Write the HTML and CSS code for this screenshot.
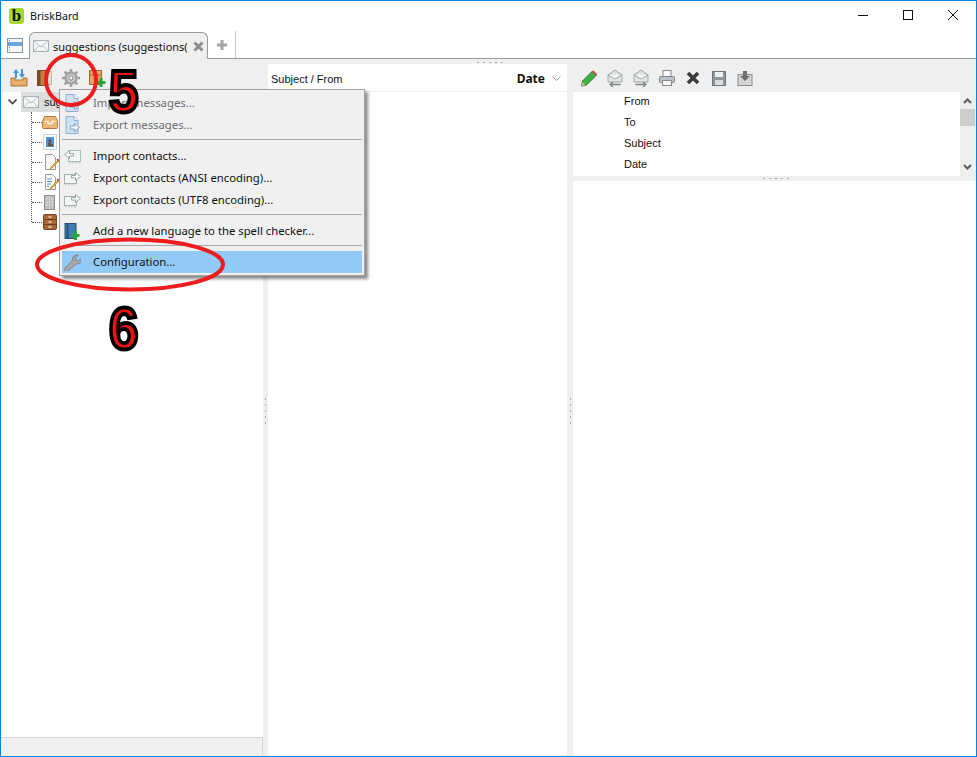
FILE: index.html
```html
<!DOCTYPE html>
<html lang="en">
<head>
   <meta charset="utf-8">
   <title>BriskBard</title>
   <link rel="stylesheet" href="styles.css">
</head>
<body>
<svg class="defs" width="0" height="0">
   <defs>
      <symbol id="mail" viewBox="0 0 16 16">
         <rect x="0.5" y="2.5" width="15" height="11" fill="#f4f6f6" stroke="#a9b4b6"/>
         <path d="M1 3l7 6 7-6M1 13l5-5.500M15 13l-5-5.500" fill="none" stroke="#b4bfc1"/>
      </symbol>
      <symbol id="doc" viewBox="0 0 16 18">
         <path d="M1.500 .5h8l4 4v13h-12z" fill="#cfe0f2" stroke="#8fb0d2"/>
         <path d="M9.500 .5v4h4" fill="#eef5fb" stroke="#8fb0d2"/>
         <path d="M6 10h4V7.500l5 4-5 4V13H6z" fill="#f4f8fc" stroke="#7ea3c8"/>
      </symbol>
      <symbol id="card-out" viewBox="0 0 17 15">
         <rect x=".5" y="3.500" width="12" height="9" fill="#f3f6f5" stroke="#a7b3b3"/>
         <path d="M2 12.500v2M5 12.500v2M8 12.500v2M11 12.500v2" stroke="#a7b3b3"/>
         <path d="M7.500 4.500h4V1.500l5 4-5 4V7h-4z" fill="#fbfbfb" stroke="#9aa6a6"/>
      </symbol>
      <symbol id="card-in" viewBox="0 0 17 15">
         <rect x="4.500" y="1.500" width="12" height="11" fill="#f3f6f5" stroke="#a7c0b8"/>
         <path d="M6 12.500v2M9 12.500v2M12 12.500v2M15 12.500v2" stroke="#a7b3b3"/>
         <path d="M9.500 4.500h-4V1.500l-5 4 5 4V7h4z" fill="#fbfbfb" stroke="#9aa6a6"/>
      </symbol>
      <symbol id="tray" viewBox="0 0 16 13">
         <path d="M2.500 .5h11l2 5v6a1 1 0 0 1-1 1h-13a1 1 0 0 1-1-1v-6z" fill="#edb777" stroke="#b07a3e"/>
         <path d="M3 5.500h3v2h4v-2h3" fill="none" stroke="#fff2dc" stroke-width="1.500"/>
      </symbol>
      <symbol id="gray-mail" viewBox="0 0 17 18">
         <path d="M1.500 6l7-5 7 5v7h-14z" fill="#e4e6e6" stroke="#9ea5a5"/>
         <path d="M1.500 6l7 4 7-4" fill="#f6f6f6" stroke="#9ea5a5"/>
      </symbol>
   </defs>
</svg>

<div class="window">
   <header class="titlebar">
      <span class="logo">b</span>
      <span class="app-name">BriskBard</span>
      <div class="win-buttons">
         <svg width="10" height="10" viewBox="0 0 10 10"><path d="M0 5.500h10" stroke="#111"/></svg>
         <svg width="10" height="10" viewBox="0 0 10 10"><rect x=".5" y=".5" width="9" height="9" fill="none" stroke="#111"/></svg>
         <svg width="10" height="10" viewBox="0 0 10 10"><path d="M0 0l10 10M10 0L0 10" stroke="#111"/></svg>
      </div>
   </header>

   <div class="tabbar">
      <svg class="tab-list" width="16" height="15" viewBox="0 0 16 15">
         <rect x=".5" y=".5" width="15" height="14" fill="#f4f6f8" stroke="#8a98a6"/>
         <rect x="1" y="4" width="14" height="4" fill="#6fa3dc"/>
         <path d="M2 2.500h1M2 9.500h1M2 12h1" stroke="#7a8894"/>
      </svg>
      <div class="tab">
         <svg width="16" height="16"><use href="#mail"/></svg>
         <span class="tab-title">suggestions (suggestions(</span>
         <svg class="tab-close" width="11" height="11" viewBox="0 0 11 11"><path d="M1.500 1.500l8 8M9.500 1.500l-8 8" stroke="#8c8c8c" stroke-width="3"/></svg>
      </div>
      <svg class="tab-add" width="10" height="10" viewBox="0 0 10 10"><path d="M5 0v10M0 5h10" stroke="#a4a4a4" stroke-width="3"/></svg>
   </div>

   <div class="grip-row"><span class="grip-h grip-top"></span></div>

   <main class="panes">
      <section class="pane-left">
         <div class="toolbar">
            <svg width="18" height="18" viewBox="0 0 18 18">
               <path d="M1 9h4v2h8V9h4v8H1z" fill="#e9ae68" stroke="#a87537"/>
               <path d="M5 9V4H3l3-4 3 4H7v5z" fill="#3f93e0"/>
               <path d="M13 0v5h2l-3 4-3-4h2V0z" fill="#3f93e0"/>
            </svg>
            <svg width="16" height="16" viewBox="0 0 16 16">
               <rect x=".5" y=".5" width="10" height="15" fill="#c08040" stroke="#7a4a20"/>
               <rect x="1" y="1" width="2.500" height="14" fill="#7a4a20"/>
               <rect x="10.500" y="1.500" width="4" height="13" fill="#e8e0d0" stroke="#999" stroke-dasharray="2 1"/>
            </svg>
            <svg class="gear" width="18" height="18" viewBox="0 0 18 18">
               <circle cx="9" cy="9" r="5.500" fill="#d0d0d0" stroke="#a2a2a2" stroke-width="2.400"/>
               <path d="M9 0v4M9 14v4M0 9h4M14 9h4M2.600 2.600l2.800 2.800M12.600 12.600l2.800 2.800M15.400 2.600l-2.800 2.800M5.400 12.600l-2.800 2.800" stroke="#a2a2a2" stroke-width="2.600"/>
               <circle cx="9" cy="9" r="2.200" fill="#f4f4f4" stroke="#808080"/>
            </svg>
            <svg width="18" height="18" viewBox="0 0 18 18">
               <rect x="1.500" y="1.500" width="12" height="14" fill="#e5a765" stroke="#a5682f"/>
               <path d="M2 6h11" stroke="#a5682f"/>
               <path d="M13 9v9M8.500 13.500h9" stroke="#25a83a" stroke-width="3"/>
            </svg>
         </div>
         <div class="tree">
            <div class="tree-root">
               <svg class="chevron" width="9" height="6" viewBox="0 0 9 6"><path d="M.5 .5l4 4 4-4" fill="none" stroke="#444" stroke-width="1.600"/></svg>
               <span class="root-item">
                  <svg width="16" height="16"><use href="#mail"/></svg>
                  <span>suggestions</span>
               </span>
            </div>
            <ul class="tree-list">
               <li><svg class="nudge-left" width="16" height="13"><use href="#tray"/></svg></li>
               <li>
                  <svg width="14" height="16" viewBox="0 0 14 16">
                     <rect x=".5" y=".5" width="13" height="15" fill="#fff" stroke="#9aa" stroke-dasharray="1 1"/>
                     <rect x="3" y="3" width="8" height="10" fill="#4a93dd"/>
                     <path d="M6 5h2v5h2v2H5z" fill="#6a4c3a"/>
                  </svg>
               </li>
               <li>
                  <svg class="nudge-right" width="16" height="17" viewBox="0 0 16 17">
                     <path d="M1.500 .5h7l3 3v12h-10z" fill="#fbfbfb" stroke="#9a9a9a"/>
                     <path d="M6 15l2-1 7-7-1-1-7 7z" fill="#e8b23c" stroke="#a87820" stroke-width=".6"/>
                     <path d="M13 5l2 2" stroke="#d83a3a" stroke-width="1.600"/>
                  </svg>
               </li>
               <li>
                  <svg class="nudge-right" width="16" height="17" viewBox="0 0 16 17">
                     <path d="M1.500 .5h7l3 3v12h-10z" fill="#fbfbfb" stroke="#9a9a9a"/>
                     <path d="M3 5h5M3 7.500h5M3 10h4M3 12.500h2" stroke="#5a8fc8"/>
                     <path d="M6 15l2-1 7-7-1-1-7 7z" fill="#e8b23c" stroke="#a87820" stroke-width=".6"/>
                     <path d="M13 5l2 2" stroke="#d83a3a" stroke-width="1.600"/>
                  </svg>
               </li>
               <li>
                  <svg class="nudge-right" width="11" height="15" viewBox="0 0 11 15">
                     <rect x=".5" y=".5" width="10" height="14" fill="#b5b5b5" stroke="#8c8c8c"/>
                     <path d="M3 1v13M5.500 1v13M8 1v13M1 4h9M1 7h9M1 10h9" stroke="#dedede" stroke-width=".7"/>
                  </svg>
               </li>
               <li>
                  <svg width="14" height="16" viewBox="0 0 14 16">
                     <rect x=".5" y=".5" width="13" height="15" rx="1.500" fill="#a9683a" stroke="#7a4620"/>
                     <path d="M1 5.500h12M1 10.500h12" stroke="#6e3d1a"/>
                     <path d="M5.500 3h3M5.500 8h3M5.500 13h3" stroke="#f0d8b8" stroke-width="1.400"/>
                  </svg>
               </li>
            </ul>
         </div>
         <div class="statusbar"><span class="status-end"></span></div>
      </section>

      <div class="split-v"><span class="grip-v"></span></div>

      <section class="pane-mid">
         <div class="list-head">
            <span class="head-subject">Subject / From</span>
            <span class="head-date">Date</span>
            <svg width="9" height="5" viewBox="0 0 9 5"><path d="M.5 .5l4 4 4-4" fill="none" stroke="#9a9a9a"/></svg>
         </div>
         <div class="list-body"></div>
      </section>

      <div class="split-v"><span class="grip-v"></span></div>

      <section class="pane-right">
         <div class="toolbar toolbar-msg">
            <svg width="17" height="17" viewBox="0 0 17 17">
               <path d="M1 16l1-5L12 1l4 4L6 15z" fill="#3fae49" stroke="#237a2c"/>
               <path d="M1 16l1-4 3 3z" fill="#e8c08a"/>
               <path d="M12 1l4 4" stroke="#d84a4a" stroke-width="2"/>
            </svg>
            <svg width="17" height="18" viewBox="0 0 17 18">
               <use href="#gray-mail" width="17" height="18"/>
               <path d="M14 15.500H4M6.500 13l-3 2.500 3 2.500" fill="none" stroke="#7f8686" stroke-width="1.400"/>
            </svg>
            <svg width="17" height="18" viewBox="0 0 17 18">
               <use href="#gray-mail" width="17" height="18"/>
               <path d="M3 15.500h10M10.500 13l3 2.500-3 2.500" fill="none" stroke="#7f8686" stroke-width="1.400"/>
            </svg>
            <svg width="16" height="16" viewBox="0 0 16 16">
               <rect x="4" y=".5" width="8" height="6" fill="#fafafa" stroke="#8c8c8c"/>
               <rect x=".5" y="6.500" width="15" height="6" rx="1" fill="#bcc2c6" stroke="#7e868c"/>
               <rect x="3.500" y="10.500" width="9" height="5" fill="#f4f4f4" stroke="#8c8c8c"/>
            </svg>
            <svg width="14" height="14" viewBox="0 0 14 14"><path d="M2 2l10 10M12 2L2 12" stroke="#3a3a3a" stroke-width="3.600"/></svg>
            <svg width="14" height="15" viewBox="0 0 14 15">
               <rect x=".5" y=".5" width="13" height="14" fill="#8e979c" stroke="#6e767a"/>
               <rect x="3" y="1" width="8" height="5" fill="#eef0f0"/>
               <rect x="3" y="9" width="8" height="5" fill="#d8dcdc"/>
            </svg>
            <svg width="15" height="15" viewBox="0 0 15 15">
               <rect x=".5" y="3.500" width="14" height="11" fill="#d6d6d6" stroke="#8c8c8c"/>
               <path d="M5.500 0h4v5h3l-5 5-5-5h3z" fill="#6e6e6e"/>
            </svg>
         </div>
         <div class="msg-head">
            <ul class="fields">
               <li>From</li>
               <li>To</li>
               <li>Subject</li>
               <li>Date</li>
            </ul>
            <div class="scroll">
               <svg width="9" height="6" viewBox="0 0 9 6"><path d="M1 5l3.500-3.500L8 5" fill="none" stroke="#5c5c5c" stroke-width="2"/></svg>
               <span class="thumb"></span>
               <svg class="scroll-down" width="9" height="6" viewBox="0 0 9 6"><path d="M1 1l3.500 3.500L8 1" fill="none" stroke="#5c5c5c" stroke-width="2"/></svg>
            </div>
         </div>
         <div class="split-h"><span class="grip-h"></span></div>
         <div class="msg-body"></div>
      </section>
   </main>

   <!-- popup menu of the gear button -->
   <div class="menu">
      <div class="menu-item off"><svg width="16" height="18" viewBox="0 0 16 18"><use href="#doc" width="16" height="18"/></svg><span>Import messages...</span></div>
      <div class="menu-item off"><svg width="16" height="18" viewBox="0 0 16 18"><use href="#doc" width="16" height="18"/></svg><span>Export messages...</span></div>
      <hr>
      <div class="menu-item"><svg width="17" height="15" viewBox="0 0 17 15"><use href="#card-in" width="17" height="15"/></svg><span>Import contacts...</span></div>
      <div class="menu-item"><svg width="17" height="15" viewBox="0 0 17 15"><use href="#card-out" width="17" height="15"/></svg><span>Export contacts (ANSI encoding)...</span></div>
      <div class="menu-item"><svg width="17" height="15" viewBox="0 0 17 15"><use href="#card-out" width="17" height="15"/></svg><span>Export contacts (UTF8 encoding)...</span></div>
      <hr>
      <div class="menu-item">
         <svg width="16" height="17" viewBox="0 0 16 17">
            <rect x=".5" y=".5" width="11" height="15" fill="#3f7cb0" stroke="#2c4f70"/>
            <rect x="2" y="1" width="2" height="14" fill="#24527c"/>
            <path d="M11 8v9M7 12.500h8" stroke="#27a83c" stroke-width="3"/>
         </svg>
         <span>Add a new language to the spell checker...</span>
      </div>
      <hr>
      <div class="menu-item active">
         <svg width="17" height="17" viewBox="0 0 17 17">
            <path d="M1 14l7.500-7.500a4.800 4.800 0 0 1 6-5.500l-3 3 .5 2.500 2.500.5 3-3a4.800 4.800 0 0 1-5.500 6L4 17a2 2 0 0 1-3-3z" fill="#a8a8a8" stroke="#777" stroke-width=".8"/>
         </svg>
         <span>Configuration...</span>
      </div>
   </div>

   <!-- red marks drawn over the screenshot -->
   <svg class="marks" width="977" height="757" viewBox="0 0 977 757">
      <circle cx="71" cy="80" r="25" fill="none" stroke="#ee1c1c" stroke-width="4"/>
      <ellipse cx="130" cy="264.500" rx="93" ry="25" fill="none" stroke="#ee1c1c" stroke-width="4"/>
   </svg>
   <span class="step step-5">5</span>
   <span class="step step-6">6</span>
</div>
</body>
</html>
```

FILE: styles.css
```css
html, body {
   margin: 0;
   padding: 0;
   height: 100%;
   overflow: hidden;
}
body {
   font-family: "Liberation Sans", Arial, sans-serif;
   font-size: 11px;
   color: #111;
}
ul {
   list-style: none;
   margin: 0;
   padding: 0;
}
.defs {
   position: absolute;
}

/* window frame */
.window {
   position: relative;
   width: 977px;
   height: 757px;
   box-sizing: border-box;
   border: 1px solid #0c84e4;
   background: #efefef;
   display: flex;
   flex-direction: column;
   overflow: hidden;
}
.titlebar {
   height: 30px;
   flex: none;
   background: white;
   display: flex;
   align-items: center;
   padding-left: 8px;
}
.logo {
   width: 15px;
   height: 16px;
   border-radius: 3px;
   background: #a6d82e;
   color: #111;
   font: bold 17px/15px "Liberation Serif", serif;
   text-align: center;
}
.app-name {
   margin-left: 6px;
   font-family: "Noto Sans", sans-serif;
   font-size: 10.7px;
}
.win-buttons {
   margin-left: auto;
   margin-bottom: 2px;
   display: flex;
   gap: 35px;
   padding-right: 18px;
}

/* tabs */
.tabbar {
   height: 28px;
   flex: none;
   box-sizing: border-box;
   background: white;
   border-bottom: 1px solid #999;
   display: flex;
   align-items: flex-end;
   padding-left: 6px;
}
.tab-list {
   margin-bottom: 5px;
}
.tab {
   width: 179px;
   height: 27px;
   box-sizing: border-box;
   margin-left: 6px;
   margin-bottom: -1px;
   border: 1px solid #999;
   border-bottom: 0;
   border-radius: 6px 6px 0 0;
   background: #efefef;
   display: flex;
   align-items: center;
   padding-left: 3px;
}
.tab-title {
   width: 137px;
   margin-left: 4px;
   overflow: hidden;
   white-space: nowrap;
   font-family: "Noto Sans", sans-serif;
   font-size: 11px;
}
.tab-close {
   margin-left: 3px;
}
.tab-add {
   margin: 0 8px 8px 9px;
}
.tabbar::after {
   content: "";
   width: 1px;
   height: 27px;
   background: #ccc;
}
.grip-row {
   height: 5px;
   flex: none;
   display: flex;
   justify-content: center;
}
.grip-h, .grip-v {
   display: block;
   background-image: radial-gradient(circle, #aaa 1px, transparent 1px);
}
.grip-h {
   width: 28px;
   height: 3px;
   background-size: 6px 3px;
}
.grip-top {
   margin-top: 2px;
}
.grip-v {
   width: 3px;
   height: 28px;
   background-size: 3px 6px;
}

/* three panes */
.panes {
   flex: 1;
   min-height: 0;
   display: flex;
}
.pane-left {
   width: 262px;
   flex: none;
   display: flex;
   flex-direction: column;
}
.pane-mid {
   width: 299px;
   flex: none;
   display: flex;
   flex-direction: column;
   margin-right: 1px;
}
.pane-right {
   flex: 1;
   min-width: 0;
   display: flex;
   flex-direction: column;
}
.split-v {
   width: 5px;
   flex: none;
   display: flex;
   align-items: center;
   justify-content: center;
}
.toolbar {
   height: 28px;
   flex: none;
   display: flex;
   align-items: center;
   padding-left: 5px;
}
/* every button is a 26px slot, the icon centres itself in it */
.toolbar svg {
   width: 26px;
}
.toolbar-msg {
   padding-left: 3px;
}

/* folder tree */
.tree {
   flex: 1;
   background: white;
}
.tree-root {
   height: 20px;
   display: flex;
   align-items: center;
   padding-left: 7px;
}
.root-item {
   margin-left: 4px;
   height: 20px;
   padding: 0 2px;
   background: #ddd;
   display: flex;
   align-items: center;
   gap: 5px;
}
.tree-list {
   margin-left: 30px;
   border-left: 1px dotted #555;
   height: 110px;
}
.tree-list li {
   height: 20px;
   display: flex;
   align-items: center;
}
.tree-list li::before {
   content: "";
   width: 10px;
   border-top: 1px dotted #555;
   margin-right: 1px;
}
.nudge-left {
   margin-left: -1px;
}
.nudge-right {
   margin-left: 1px;
}
.statusbar {
   height: 18px;
   flex: none;
   border-top: 1px solid #d4d4d4;
   display: flex;
   justify-content: flex-end;
}
.status-end {
   width: 1px;
   margin: 1px 0;
   background: #d0d0d0;
}

/* message list */
.list-head {
   height: 28px;
   flex: none;
   box-sizing: border-box;
   background: white;
   border-bottom: 1px solid #efefef;
   display: flex;
   align-items: center;
   padding: 2px 6px 0 3px;
}
.head-subject {
   flex: 1;
}
.head-date {
   font-family: "Noto Sans", sans-serif;
   font-size: 12px;
   font-weight: bold;
   margin-right: 7px;
}
.list-body {
   flex: 1;
   background: white;
}

/* message view */
.msg-head {
   height: 84px;
   flex: none;
   background: white;
   display: flex;
}
.fields {
   flex: 1;
   padding-left: 51px;
}
.fields li {
   height: 21px;
   line-height: 19px;
}
.scroll {
   width: 15px;
   box-sizing: border-box;
   box-shadow: 1px 0 0 #efefef;
   margin-right: 1px;
   background: #efefef;
   display: flex;
   flex-direction: column;
   align-items: center;
   padding-top: 6px;
}
.thumb {
   width: 15px;
   height: 17px;
   background: #cdcdcd;
   margin-top: 5px;
}
.scroll-down {
   margin-top: auto;
   margin-bottom: 6px;
}
.split-h {
   height: 5px;
   flex: none;
   display: flex;
   justify-content: center;
   align-items: center;
}
.msg-body {
   flex: 1;
   background: white;
}

/* popup menu */
.menu {
   position: absolute;
   left: 58px;
   top: 88px;
   width: 306px;
   height: 187px;
   box-sizing: border-box;
   background: #f0f0f0;
   border: 1px solid #a0a0a0;
   box-shadow: 3px 3px 3px rgba(0, 0, 0, .45);
   padding: 2px;
   font-family: "Noto Sans", sans-serif;
   font-size: 11.3px;
}
.menu hr {
   height: 0;
   margin: 3px 0 5px;
   border: 0;
   border-top: 1px solid #a8a8a8;
}
.menu-item {
   height: 22px;
   display: flex;
   align-items: center;
   padding-left: 2px;
}
.menu-item svg {
   width: 17px;
   flex: none;
}
.menu-item span {
   margin-left: 12px;
   padding-bottom: 1px;
}
.menu-item.off span {
   color: #6d6d6d;
}
.menu-item.active {
   background: #91c9f7;
}

/* annotations */
.marks {
   position: absolute;
   left: -1px;
   top: -1px;
   pointer-events: none;
}
.step {
   position: absolute;
   font: bold 60px/60px "Liberation Sans", sans-serif;
   color: #f01010;
   -webkit-text-stroke: 4px black;
   transform: scaleX(.88);
   transform-origin: left top;
}
.step-5 {
   left: 108px;
   top: 61px;
}
.step-6 {
   left: 108px;
   top: 298px;
}
```
